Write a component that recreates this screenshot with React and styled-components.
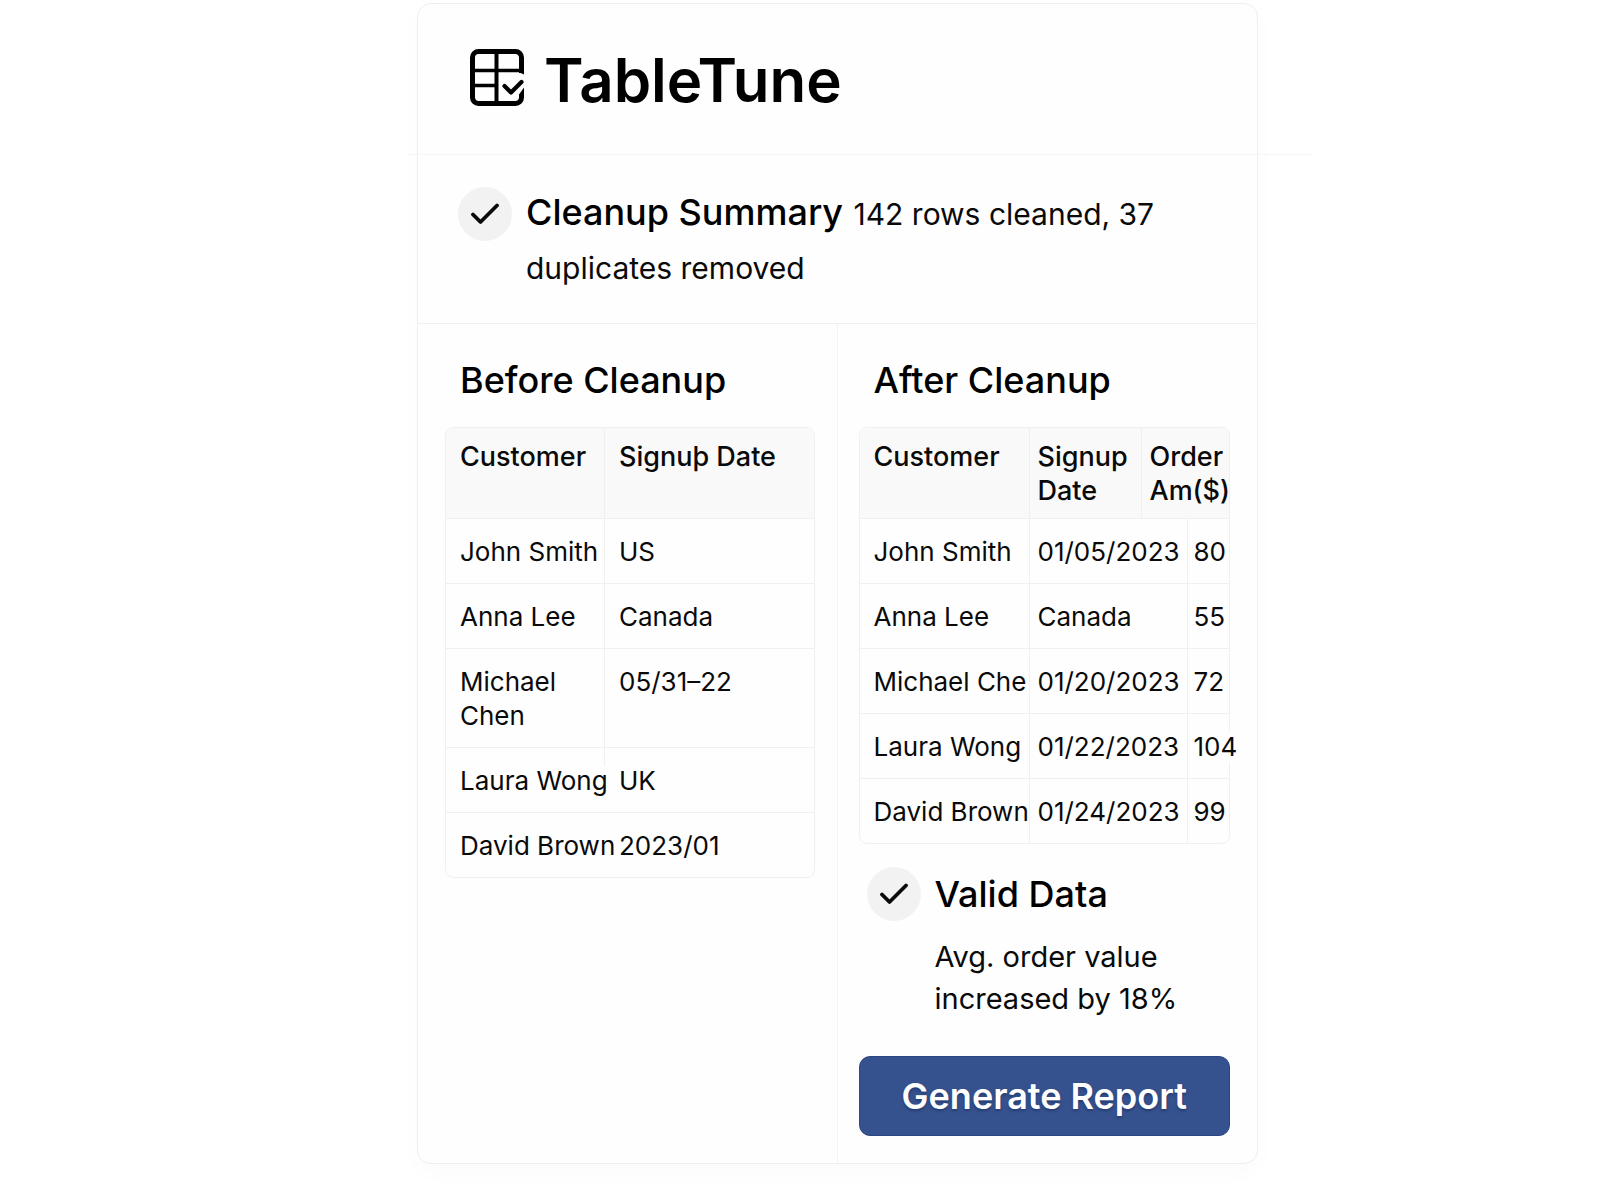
import styled, { createGlobalStyle } from 'styled-components';

const beforeRows = [
  { customer: 'John Smith', signup: 'US', rule: 'full' },
  { customer: 'Anna Lee', signup: 'Canada', rule: 'full' },
  { customer: 'Michael\nChen', signup: '05/31–22', rule: 'full' },
  { customer: 'Laura Wong', signup: 'UK', rule: 'short' },
  { customer: 'David Brown', signup: '2023/01', rule: 'none' },
];

const afterRows = [
  { customer: 'John Smith', signup: '01/05/2023', amount: '80' },
  { customer: 'Anna Lee', signup: 'Canada', amount: '55' },
  { customer: 'Michael Che', signup: '01/20/2023', amount: '72' },
  { customer: 'Laura Wong', signup: '01/22/2023', amount: '104' },
  { customer: 'David Brown', signup: '01/24/2023', amount: '99' },
];

function Logo() {
  return (
    <LogoIcon viewBox="0 0 54 57" fill="none" stroke="currentColor" aria-hidden="true">
      <path d="M51.5 24V8.5a6 6 0 0 0-6-6h-37a6 6 0 0 0-6 6v40a6 6 0 0 0 6 6h37a6 6 0 0 0 6-6V46" strokeWidth="5" />
      <path d="M26.5 2v52" strokeWidth="4" />
      <path d="M2 21.5h50M2 36.5h24" strokeWidth="3.4" />
      <path d="M49 23.2h5v2.3zM49 45.5l5-7V49h-5z" fill="currentColor" stroke="none" />
      <path d="M34.5 37l6.5 6.5L51.5 33" strokeWidth="4.2" strokeLinecap="round" strokeLinejoin="round" />
    </LogoIcon>
  );
}

function CheckBadge() {
  return (
    <Badge>
      <svg width="28" height="22" viewBox="0 0 28 22" fill="none" aria-hidden="true">
        <path d="M2 11.5l7.5 7.5L26 2.5" stroke="#0a0a0a" strokeWidth="3.8" strokeLinecap="round" strokeLinejoin="round" />
      </svg>
    </Badge>
  );
}

export default function App() {
  return (
    <>
      <GlobalStyle />
      <Page>
        <Card>
          {/* Brand */}
          <Header>
            <Logo />
            <Brand>TableTune</Brand>
          </Header>
          <WideRule />

          {/* Summary */}
          <Summary>
            <CheckBadge />
            <SummaryText>
              <SummaryTitle>Cleanup Summary</SummaryTitle> 142 rows cleaned, 37
              <br />
              duplicates removed
            </SummaryText>
          </Summary>

          {/* Before / after */}
          <Columns>
            <Column>
              <ColumnTitle id="before-title">Before Cleanup</ColumnTitle>
              <TableFrame>
                <Table aria-labelledby="before-title">
                  <colgroup>
                    <Col $width="158px" />
                    <Col />
                  </colgroup>
                  <thead>
                    <tr>
                      <HeadCell $pad={14}>Customer</HeadCell>
                      <HeadCell $pad={14}>Signuþ Date</HeadCell>
                    </tr>
                  </thead>
                  <tbody>
                    {beforeRows.map((row) => (
                      <tr key={row.customer}>
                        <Cell $pad={14}>{row.customer}</Cell>
                        <Cell $pad={15} $rule={row.rule}>{row.signup}</Cell>
                      </tr>
                    ))}
                  </tbody>
                </Table>
              </TableFrame>
            </Column>

            <Column>
              <ColumnTitle id="after-title">After Cleanup</ColumnTitle>
              <TableFrame>
                <Table aria-labelledby="after-title">
                  <colgroup>
                    <Col $width="169px" />
                    <Col $width="112px" />
                    <Col $width="46px" />
                    <Col />
                  </colgroup>
                  <thead>
                    <tr>
                      <HeadCell $pad={14}>Customer</HeadCell>
                      <HeadCell $pad={8}>{'Signup\nDate'}</HeadCell>
                      <HeadCell $pad={8} colSpan={2}>{'Order\nAm($)'}</HeadCell>
                    </tr>
                  </thead>
                  <tbody>
                    {afterRows.map((row) => (
                      <tr key={row.customer}>
                        <Cell $pad={14}>{row.customer}</Cell>
                        <Cell $pad={9} $rule="full" colSpan={2}>{row.signup}</Cell>
                        <Cell $pad={7} $rule="full">
                          <Amount>{row.amount}</Amount>
                        </Cell>
                      </tr>
                    ))}
                  </tbody>
                </Table>
              </TableFrame>

              <Valid>
                <CheckBadge />
                <div>
                  <ValidTitle>Valid Data</ValidTitle>
                  <ValidNote>Avg. order value increased by 18%</ValidNote>
                </div>
              </Valid>

              <ReportButton type="button">Generate Report</ReportButton>
            </Column>
          </Columns>
        </Card>
      </Page>
    </>
  );
}

const GlobalStyle = createGlobalStyle`
  * {
    box-sizing: border-box;
  }

  body {
    margin: 0;
    background: #fff;
    color: #0a0a0a;
    font-family: Inter, 'Liberation Sans', sans-serif;
  }
`;

const Page = styled.main`
  display: grid;
  grid-template-columns: 417fr minmax(auto, 841fr) 342fr;
  padding: 3px 0 36px;
`;

const Card = styled.div`
  grid-column: 2;
  border: 1px solid #efefef;
  border-radius: 14px;
  background: #fefefe;
  box-shadow: 0 8px 24px rgba(0, 0, 0, 0.02);
`;

const Header = styled.header`
  display: flex;
  align-items: flex-start;
  gap: 20px;
  padding: 45px 52px 43px;
`;

const LogoIcon = styled.svg`
  flex: none;
  width: 54px;
  height: 57px;
  color: #000;
`;

const Brand = styled.h1`
  margin: 0;
  color: #000;
  font-size: 60px;
  font-weight: 600;
  line-height: 62px;
`;

const WideRule = styled.hr`
  height: 1px;
  margin: 0 -54px 0 -10px;
  border: 0;
  background: #f6f6f6;
`;

const Summary = styled.section`
  display: flex;
  align-items: flex-start;
  gap: 14px;
  padding: 32px 40px 28px;
  border-bottom: 1px solid #efefef;
`;

const Badge = styled.span`
  display: flex;
  flex: none;
  align-items: center;
  justify-content: center;
  width: 54px;
  height: 54px;
  border-radius: 50%;
  background: #f2f2f3;
`;

const SummaryText = styled.div`
  font-size: 30px;
  line-height: 54px;
`;

const Heading = styled.h2`
  margin: 0;
  color: #000;
  font-size: 36px;
  font-weight: 500;
`;

const SummaryTitle = styled(Heading)`
  display: inline;
  margin-right: 2px;
  line-height: 36px;
`;

const Columns = styled.div`
  display: grid;
  grid-template-columns: 419fr 421fr;
`;

const Column = styled.section`
  min-width: 0;
  padding: 32px 22px 27px 27px;

  & + & {
    padding: 32px 27px 27px 21px;
    border-left: 1px solid #f3f3f3;
  }
`;

const ColumnTitle = styled(Heading)`
  padding: 0 15px;
  line-height: 48px;
`;

const TableFrame = styled.div`
  margin-top: 23px;
  border: 1px solid #f0f0f0;
  border-radius: 8px;
`;

const Table = styled.table`
  width: 100%;
  border-collapse: separate;
  border-spacing: 0;
  table-layout: fixed;
  font-size: 26px;
  line-height: 34px;
`;

const Col = styled.col`
  width: ${(props) => props.$width || 'auto'};
`;

const HeadCell = styled.th`
  height: 91px;
  padding: 12px 0 10px ${(props) => props.$pad}px;
  border-bottom: 1px solid #f0f0f0;
  background: #f9f9f9;
  font-size: 27px;
  font-weight: 500;
  text-align: left;
  vertical-align: top;
  white-space: pre;

  &:not(:first-child) {
    border-left: 1px solid #efefef;
  }

  &:first-child {
    border-top-left-radius: 8px;
  }

  &:last-child {
    border-top-right-radius: 8px;
  }
`;

const ruleHeights = { full: '100%', short: '18px' };

const Cell = styled.td`
  padding: 16px 0 14px ${(props) => props.$pad}px;
  border-bottom: 1px solid #f0f0f0;
  background: linear-gradient(#f0f0f0, #f0f0f0) left top / 1px ${(props) => ruleHeights[props.$rule] || '0'} no-repeat;
  vertical-align: top;
  white-space: pre;

  tr:last-child > & {
    border-bottom: 0;
  }
`;

const Amount = styled.span`
  background: #fefefe;
`;

const Valid = styled.div`
  display: flex;
  align-items: flex-start;
  gap: 14px;
  margin-top: 23px;
  padding-left: 8px;
`;

const ValidTitle = styled(Heading).attrs({ as: 'h3' })`
  line-height: 54px;
`;

const ValidNote = styled.p`
  margin: 15px 0 0;
  font-size: 29px;
  line-height: 42px;
`;

const ReportButton = styled.button`
  width: 100%;
  margin-top: 36px;
  padding: 16px;
  border: 1px solid #2a4684;
  border-radius: 11px;
  background: #36528e;
  color: #fff;
  font-family: inherit;
  font-size: 36px;
  font-weight: 600;
  line-height: 46px;
  text-shadow: 0 2px 3px rgba(10, 25, 70, 0.4);
  cursor: pointer;
`;
